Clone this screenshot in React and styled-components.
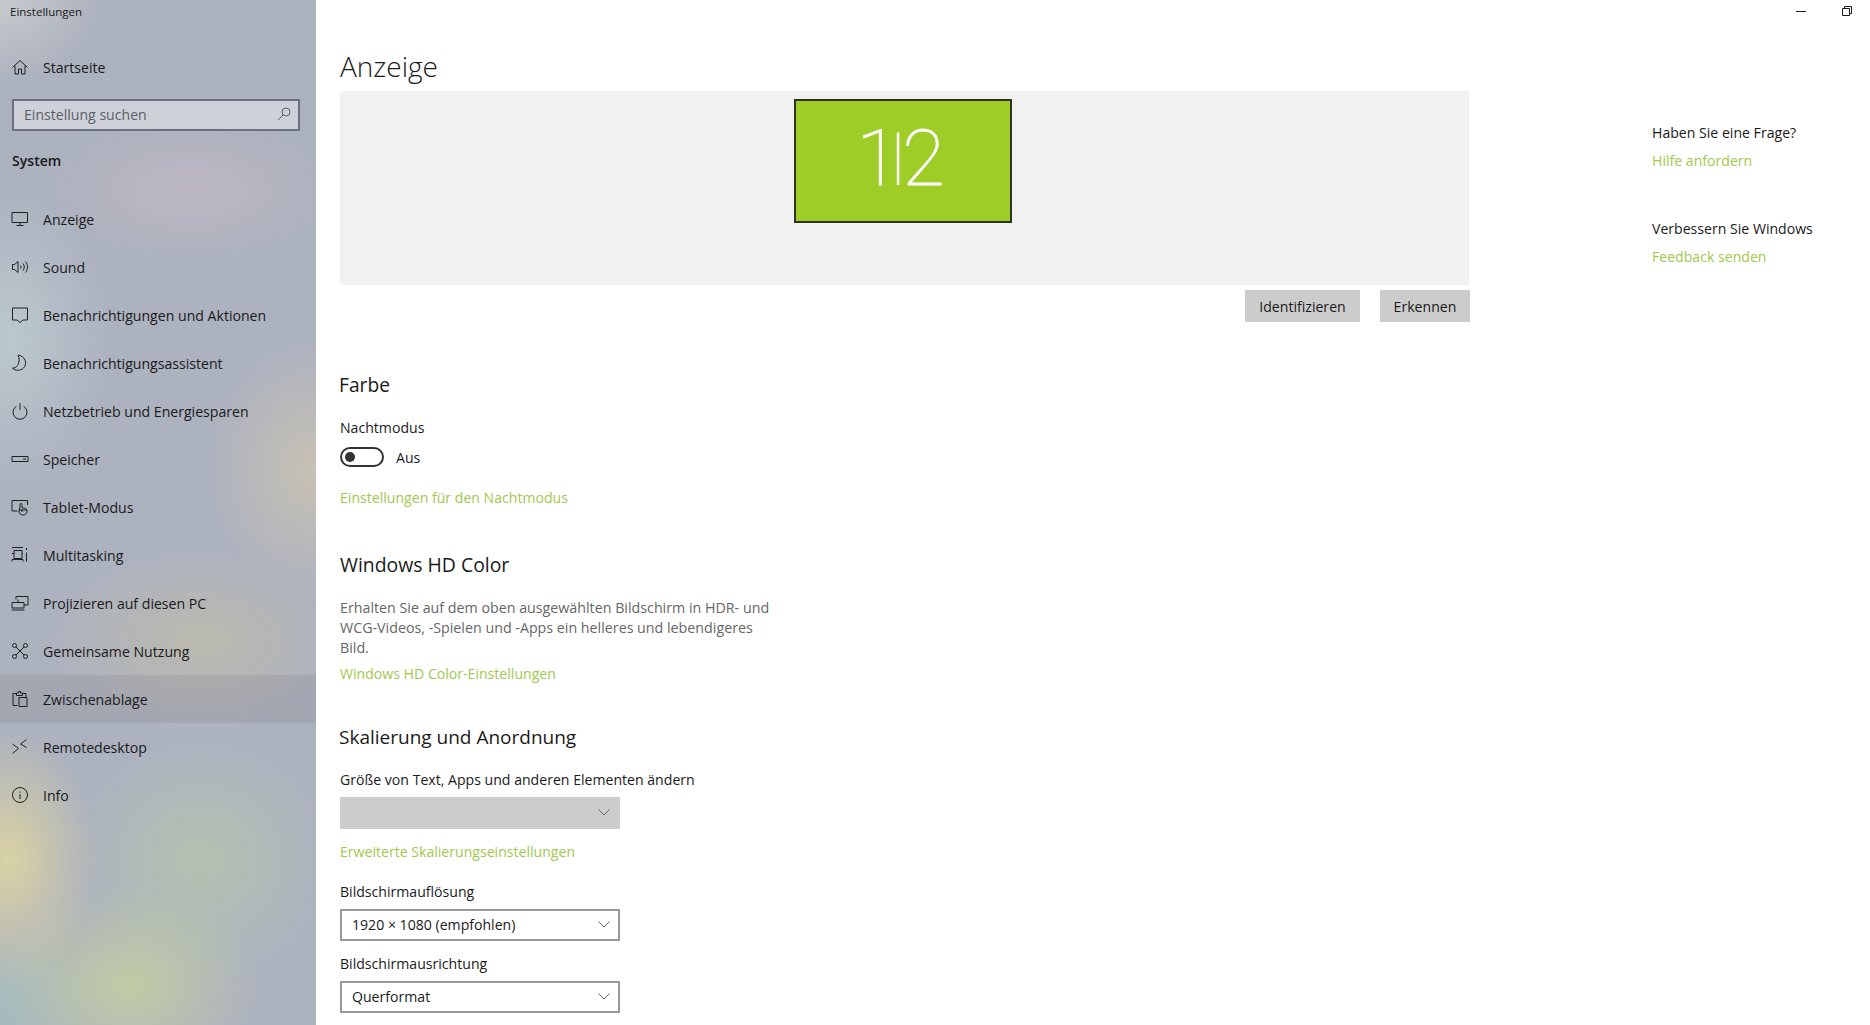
import React from 'react';
import styled, { createGlobalStyle } from 'styled-components';

const GlobalStyle = createGlobalStyle`
  html, body {
    margin: 0;
    padding: 0;
    background: white;
  }
  * {
    box-sizing: border-box;
  }
`

const Window = styled.div`
  display: flex;
  width: 100%;
  height: 100vh;
  overflow: hidden;
  font-family: "Open Sans", "Noto Sans", sans-serif;
  font-size: 14.1px;
  color: #1a1a1a;
  background: white;
`

const Sidebar = styled.nav`
  flex: 0 0 316px;
  display: flex;
  flex-direction: column;
  background-color: #adb2bf;
  background-image:
    radial-gradient(ellipse 90px 130px at 8px 860px, rgba(222, 214, 160, 0.9), rgba(222, 214, 160, 0) 100%),
    radial-gradient(ellipse 130px 100px at 130px 985px, rgba(196, 208, 160, 0.85), rgba(196, 208, 160, 0) 100%),
    radial-gradient(ellipse 130px 120px at 200px 860px, rgba(182, 200, 170, 0.7), rgba(182, 200, 170, 0) 100%),
    radial-gradient(ellipse 90px 70px at 0px 1000px, rgba(160, 196, 190, 0.6), rgba(160, 196, 190, 0) 100%),
    radial-gradient(ellipse 110px 130px at 316px 470px, rgba(204, 196, 178, 0.85), rgba(204, 196, 178, 0) 100%),
    radial-gradient(ellipse 140px 70px at 190px 190px, rgba(196, 186, 196, 0.7), rgba(196, 186, 196, 0) 100%),
    radial-gradient(ellipse 100px 150px at 10px 340px, rgba(190, 206, 210, 0.8), rgba(190, 206, 210, 0) 100%),
    radial-gradient(ellipse 150px 90px at 200px 640px, rgba(190, 188, 170, 0.8), rgba(190, 188, 170, 0) 100%),
    radial-gradient(ellipse 100px 80px at 0px 0px, rgba(200, 206, 206, 0.9), rgba(200, 206, 206, 0) 100%);
`

const AppTitle = styled.div`
  height: 24px;
  padding-left: 10px;
  font-size: 11.5px;
  line-height: 24px;
`

const HomeRow = styled.div`
  display: flex;
  align-items: center;
  gap: 14px;
  height: 48px;
  margin-top: 19px;
  padding-left: 11px;
`

const SearchBox = styled.div`
  display: flex;
  align-items: center;
  justify-content: space-between;
  width: 288px;
  height: 32px;
  margin: 8px 0 0 12px;
  padding: 0 7px 2px 10px;
  border: 2px solid #6c7080;
  background: rgba(255, 255, 255, 0.4);
  color: #5b5f68;
`

const GroupLabel = styled.div`
  height: 20px;
  margin: 20px 0 24px 12px;
  font-weight: 600;
  line-height: 20px;
`

const NavList = styled.div`
  display: flex;
  flex-direction: column;
`

const NavRow = styled.div`
  display: flex;
  align-items: center;
  gap: 14px;
  height: 48px;
  padding-left: 11px;
  background: ${props => props.$active ? 'rgba(70, 60, 60, 0.09)' : 'transparent'};
`

const IconSvg = styled.svg`
  flex: 0 0 18px;
  width: 18px;
  height: 18px;
  fill: none;
  stroke: #1f2024;
  stroke-width: 1;
`

const Pane = styled.main`
  flex: 1;
  display: flex;
  flex-direction: column;
`

const TopBar = styled.div`
  display: flex;
  justify-content: flex-end;
  align-items: center;
  gap: 36px;
  height: 22px;
  padding-right: 18px;
`

const WindowGlyph = styled.svg`
  width: 10px;
  height: 10px;
  fill: none;
  stroke: #1a1a1a;
  stroke-width: 1;
`

const Body = styled.div`
  flex: 1;
  display: flex;
  padding-top: 2px;
`

const Content = styled.div`
  flex: 0 0 1336px;
  padding-left: 24px;
`

const PageTitle = styled.h1`
  margin: 0;
  padding-top: 22px;
  height: 67px;
  font-size: 28px;
  font-weight: 300;
  line-height: 40px;
`

const Preview = styled.div`
  display: flex;
  justify-content: center;
  width: 1129px;
  height: 194px;
  padding: 8px 3px 0 0;
  background: #f1f1f1;
`

const Monitor = styled.div`
  display: flex;
  align-items: center;
  justify-content: center;
  width: 218px;
  height: 124px;
  padding: 0 5px 5px 0;
  border: 2px solid #2f3324;
  background: #9dcd26;
  color: white;
  font-family: Roboto, "Open Sans", sans-serif;
  font-size: 78px;
  font-weight: 100;
  -webkit-text-stroke: 0.8px white;
`

const MonitorDigit = styled.span`
  letter-spacing: ${props => props.$spacing}px;
`

// set smaller than the digits so the pipe stops at their height
const MonitorBar = styled.span`
  margin-bottom: 7px;
  font-size: 62px;
  letter-spacing: -2px;
`

const ButtonRow = styled.div`
  display: flex;
  justify-content: flex-end;
  gap: 20px;
  width: 1130px;
  margin-top: 5px;
`

const Button = styled.div`
  display: flex;
  align-items: center;
  justify-content: center;
  width: ${props => props.$width}px;
  height: 32px;
  background: #cccccc;
`

const SectionTitle = styled.h2`
  margin: ${props => props.$top}px 0 0 ${props => props.$left || 0}px;
  height: 28px;
  font-size: ${props => props.$size || 19.2}px;
  font-weight: 400;
  line-height: 28px;
`

const Label = styled.div`
  height: 20px;
  margin-top: ${props => props.$top}px;
  line-height: 20px;
`

const TextLink = styled.div`
  height: 20px;
  margin-top: ${props => props.$top}px;
  color: #a0c94e;
  line-height: 20px;
`

const ToggleRow = styled.div`
  display: flex;
  align-items: center;
  gap: 12px;
  height: 20px;
  margin-top: 9px;
`

const ToggleTrack = styled.div`
  display: flex;
  align-items: center;
  width: 44px;
  height: 20px;
  padding-left: 3px;
  border: 2px solid #333333;
  border-radius: 10px;
`

const ToggleThumb = styled.div`
  width: 10px;
  height: 10px;
  border-radius: 50%;
  background: #333333;
`

const Description = styled.p`
  width: 440px;
  margin: 19px 0 0 0;
  color: #666666;
  font-size: 14.25px;
  line-height: 20px;
`

const Select = styled.div`
  display: flex;
  align-items: center;
  justify-content: space-between;
  width: 280px;
  height: 32px;
  margin-top: 7px;
  padding: 0 8px 1px 10px;
  border: 2px solid ${props => props.$disabled ? '#cccccc' : '#999999'};
  background: ${props => props.$disabled ? '#cccccc' : 'white'};
`

const Aside = styled.aside`
  flex: 1;
  padding-top: 99px;
`

const AsideText = styled.div`
  height: 20px;
  margin-top: ${props => props.$top}px;
  line-height: 20px;
`

const Icon = ({ children }) => <IconSvg viewBox="0 0 18 18">{children}</IconSvg>

const Chevron = () => (
  <svg width="12" height="7" viewBox="0 0 12 7" fill="none" stroke="#666" strokeWidth="1">
    <path d="M0.5 0.5L6 6L11.5 0.5" />
  </svg>
)

const icons = {
  home: <path d="M1.5 9.5L9 2.5l7.5 7M4 7.5v8.5h3.5v-5h3v5H14V7.5" />,
  display: <path d="M1 2.5h15.500v10H1zM9 12.500v3M5.500 15.500h7" />,
  sound: <path d="M1.500 6.500h2L7 3.500v11l-3.500-3h-2zM9.500 7.500c.8 1 .8 2 0 3M12 5.500c1.700 2 1.700 5 0 7M14.500 3.500c2.700 3.200 2.700 7.800 0 11" />,
  notify: <path d="M1.500 2h15v12h-4.500L9 16.500 6 14H1.500z" />,
  moon: <path d="M7 1c7 1 10 8.500 5.500 13-3.500 3.300-8.500 2.800-11 .2 5 .3 8.500-6.700 5.500-13.200z" />,
  power: <path d="M5.500 4.200a7 7 0 1 0 7 0M9 1v7" />,
  storage: <path d="M1 6.500h16v5H1zM12 9h3" />,
  tablet: <path d="M6.500 13H1V2.500h15.500V7M9 9V6.500a1 1 0 0 1 2 0v3.500c2.500 0 5 .5 5 2.500 0 3-1.500 4.500-4 4.500s-4-1.500-4-4zM11 11v3M8 12h8" />,
  multitask: <path d="M1 1.500h11M3 4.500h8v8H3zM1 7.500h2M11 7.500h1M1 15.500v-2h11v2M15.500 2v2M15.500 6.500v9" />,
  project: <path d="M5 5.500V2.500h12v8.500h-4M1 8.500h12V14H1zM0.500 16h13M7 5.500v3" />,
  share: <path d="M5 5l8 8M13 5l-8 8M5.500 3.500a2 2 0 1 1-4 0 2 2 0 0 1 4 0zM16.500 3.500a2 2 0 1 1-4 0 2 2 0 0 1 4 0zM5.500 14.500a2 2 0 1 1-4 0 2 2 0 0 1 4 0zM16.500 14.500a2 2 0 1 1-4 0 2 2 0 0 1 4 0z" />,
  clipboard: <path d="M6.500 15.500H2V3.500h3.500M11.500 3.500H15V7M5.500 5.500V3h2V1.500h2V3h2v2.500zM8 7.500h8v9H8z" />,
  remote: <path d="M1.500 6l6 4.500-6 5M15.500 1.500L9.500 6l6 3.500" />,
  info: <path d="M16.500 9a7.500 7.500 0 1 1-15 0 7.500 7.500 0 0 1 15 0zM9 8v5M9 5.500v1.200" />,
}

const navItems = [
  ['display', 'Anzeige'],
  ['sound', 'Sound'],
  ['notify', 'Benachrichtigungen und Aktionen'],
  ['moon', 'Benachrichtigungsassistent'],
  ['power', 'Netzbetrieb und Energiesparen'],
  ['storage', 'Speicher'],
  ['tablet', 'Tablet-Modus'],
  ['multitask', 'Multitasking'],
  ['project', 'Projizieren auf diesen PC'],
  ['share', 'Gemeinsame Nutzung'],
  ['clipboard', 'Zwischenablage'],
  ['remote', 'Remotedesktop'],
  ['info', 'Info'],
]

const App = () => {
  return (
    <Window>
      <GlobalStyle />
      <Sidebar>
        <AppTitle>Einstellungen</AppTitle>
        <HomeRow><Icon>{icons.home}</Icon>Startseite</HomeRow>
        <SearchBox>
          Einstellung suchen
          <svg width="14" height="14" viewBox="0 0 14 14" fill="none" stroke="#5b5f68" strokeWidth="1">
            <path d="M13 5a4 4 0 1 1-8 0 4 4 0 0 1 8 0zM6 8l-5 5" />
          </svg>
        </SearchBox>
        <GroupLabel>System</GroupLabel>
        <NavList>
          {navItems.map(([icon, label]) => (
            <NavRow key={label} $active={label === 'Zwischenablage'}>
              <Icon>{icons[icon]}</Icon>
              {label}
            </NavRow>
          ))}
        </NavList>
      </Sidebar>
      <Pane>
        <TopBar>
          <WindowGlyph viewBox="0 0 10 10"><path d="M0 5.500h10" /></WindowGlyph>
          <WindowGlyph viewBox="0 0 10 10"><path d="M.5 2.500h7v7h-7zM2.500 2.500v-2h7v7h-2" /></WindowGlyph>
        </TopBar>
        <Body>
          <Content>
            <PageTitle>Anzeige</PageTitle>
            <Preview>
              <Monitor>
                <MonitorDigit $spacing={-7}>1</MonitorDigit>
                <MonitorBar>|</MonitorBar>
                <MonitorDigit $spacing={0}>2</MonitorDigit>
              </Monitor>
            </Preview>
            <ButtonRow>
              <Button $width={115}>Identifizieren</Button>
              <Button $width={90}>Erkennen</Button>
            </ButtonRow>

            <SectionTitle $top={49} $left={-1}>Farbe</SectionTitle>
            <Label $top={19}>Nachtmodus</Label>
            <ToggleRow>
              <ToggleTrack><ToggleThumb /></ToggleTrack>
              Aus
            </ToggleRow>
            <TextLink $top={21}>Einstellungen für den Nachtmodus</TextLink>

            <SectionTitle $top={43} $size={19.4}>Windows HD Color</SectionTitle>
            <Description>
              Erhalten Sie auf dem oben ausgewählten Bildschirm in HDR- und WCG-Videos, -Spielen und -Apps ein helleres und lebendigeres Bild.
            </Description>
            <TextLink $top={6}>Windows HD Color-Einstellungen</TextLink>

            <SectionTitle $top={39} $left={-1} $size={19}>Skalierung und Anordnung</SectionTitle>
            <Label $top={19}>Größe von Text, Apps und anderen Elementen ändern</Label>
            <Select $disabled><span /><Chevron /></Select>
            <TextLink $top={13}>Erweiterte Skalierungseinstellungen</TextLink>
            <Label $top={20}>Bildschirmauflösung</Label>
            <Select>1920 × 1080 (empfohlen)<Chevron /></Select>
            <Label $top={13}>Bildschirmausrichtung</Label>
            <Select>Querformat<Chevron /></Select>
          </Content>
          <Aside>
            <AsideText $top={0}>Haben Sie eine Frage?</AsideText>
            <TextLink $top={8}>Hilfe anfordern</TextLink>
            <AsideText $top={48}>Verbessern Sie Windows</AsideText>
            <TextLink $top={8}>Feedback senden</TextLink>
          </Aside>
        </Body>
      </Pane>
    </Window>
  )
}

export default App;
